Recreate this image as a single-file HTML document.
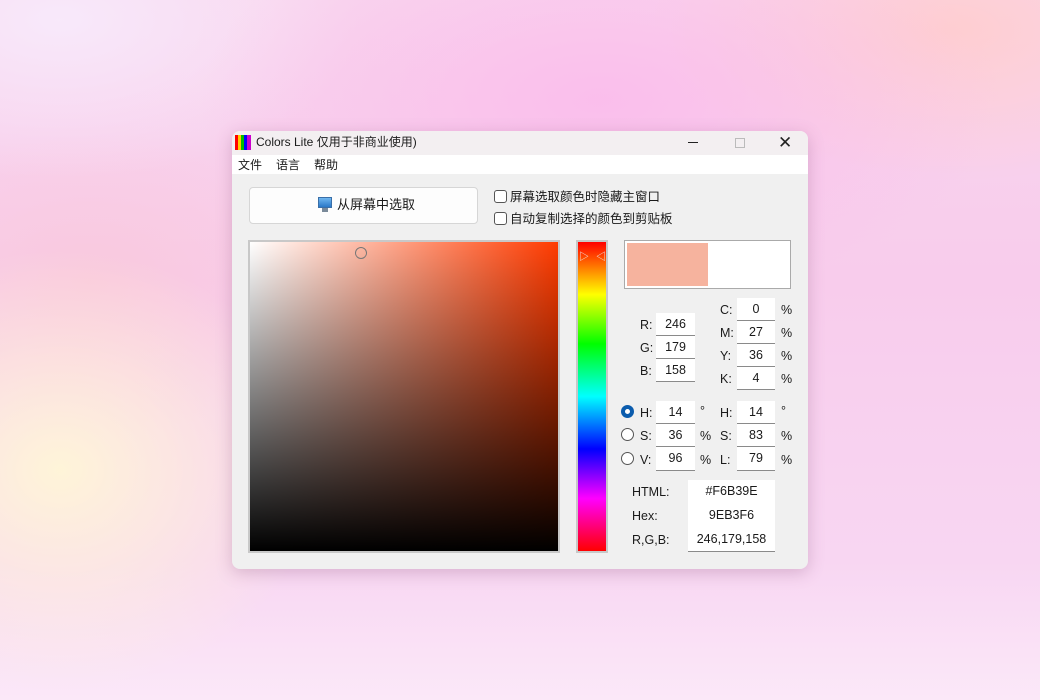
<!DOCTYPE html>
<html><head><meta charset="utf-8"><style>
*{margin:0;padding:0;box-sizing:border-box}
body{width:1040px;height:700px;overflow:hidden;position:relative;font-family:"Liberation Sans","Noto Sans CJK SC",sans-serif;font-size:12px;color:#1a1a1a;
background:
radial-gradient(ellipse 260px 220px at 60px 470px,rgba(255,246,215,.95),rgba(255,246,215,0)),
radial-gradient(ellipse 400px 200px at 600px 100px,rgba(250,185,235,.8),rgba(250,185,235,0)),
radial-gradient(ellipse 300px 150px at 950px 30px,rgba(255,205,205,.9),rgba(255,205,205,0)),
radial-gradient(ellipse 300px 160px at 60px 20px,rgba(248,235,252,.9),rgba(248,235,252,0)),
radial-gradient(ellipse 250px 160px at 90px 280px,rgba(250,200,215,.7),rgba(250,200,215,0)),
linear-gradient(180deg,#f9d6ee 0%,#f8ccec 40%,#f8d6f2 80%,#fbe8f8 100%);}
.a{position:absolute}
.win{left:232px;top:131px;width:576px;height:438px;background:#f0f0f0;border-radius:8px;overflow:hidden;box-shadow:0 4px 16px rgba(120,60,100,.25)}
.tb{left:0;top:0;width:576px;height:24px;background:#f3eff1}
.mn{left:0;top:24px;width:576px;height:19px;background:#fff}
.in{position:absolute;background:#fff;border-bottom:1px solid #8a8a8a;text-align:center;line-height:22px;font-size:12.5px}
.lb{position:absolute;font-size:12.5px;line-height:16px}
.cb{position:absolute;width:13px;height:13px;border:1px solid #555;border-radius:3px;background:#fff}
.rd{position:absolute;width:13px;height:13px;border:1px solid #555;border-radius:50%;background:#fff}
</style></head><body>
<div class="a win">
 <div class="a tb"></div>
 <div class="a" style="left:3px;top:4px;width:16px;height:15px;background:linear-gradient(90deg,#f00 0 3px,#fc0 3px 6px,#0b0 6px 9px,#00f 9px 12px,#c0c 12px 16px)"></div>
 <div class="a" style="left:24px;top:3px;font-size:12px;line-height:16px">Colors Lite 仅用于非商业使用)</div>
 <div class="a" style="left:456px;top:11px;width:10px;height:1px;background:#222"></div>
 <div class="a" style="left:503px;top:7px;width:10px;height:10px;border:1px solid #bbb"></div>
 <div class="a" style="left:546px;top:2px;font-size:17px;color:#222">✕</div>
 <div class="a mn"></div>
 <div class="a" style="left:6px;top:26px;font-size:12px;line-height:16px">文件</div>
 <div class="a" style="left:44px;top:26px;font-size:12px;line-height:16px">语言</div>
 <div class="a" style="left:82px;top:26px;font-size:12px;line-height:16px">帮助</div>
</div>
<!-- button -->
<div class="a" style="left:249px;top:187px;width:229px;height:37px;background:#fdfdfd;border:1px solid #d6d6d6;border-radius:4px"></div>
<div class="a" style="left:318px;top:197px;width:14px;height:11px;background:linear-gradient(#6fb6f0,#2a78c8);border:1px solid #3a6fa8"></div>
<div class="a" style="left:322px;top:208px;width:6px;height:4px;background:#7a8a9a"></div>
<div class="lb" style="left:337px;top:197px;font-size:13px">从屏幕中选取</div>
<div class="cb" style="left:494px;top:190px"></div>
<div class="lb" style="left:510px;top:189px">屏幕选取颜色时隐藏主窗口</div>
<div class="cb" style="left:494px;top:212px"></div>
<div class="lb" style="left:510px;top:211px">自动复制选择的颜色到剪贴板</div>
<!-- SV square -->
<div class="a" style="left:248px;top:240px;width:312px;height:313px;border:2px solid #c8c8c8;background:linear-gradient(to bottom,rgba(0,0,0,0),#000),linear-gradient(to right,#fff,#ff3b00)"></div>
<div class="a" style="left:355px;top:247px;width:12px;height:12px;border:1.5px solid #777;border-radius:50%"></div>
<!-- hue -->
<div class="a" style="left:576px;top:240px;width:32px;height:313px;border:2px solid #c8c8c8;background:linear-gradient(#f00,#ff0 17%,#0f0 33%,#0ff 50%,#00f 67%,#f0f 83%,#f00)"></div>
<div class="a" style="left:579px;top:248px;font-size:10px;color:#eee">▷</div>
<div class="a" style="left:596px;top:248px;font-size:10px;color:#eee">◁</div>
<!-- swatch -->
<div class="a" style="left:624px;top:240px;width:167px;height:49px;background:#fff;border:1px solid #aaa"></div>
<div class="a" style="left:627px;top:243px;width:81px;height:43px;background:#f6b39e"></div>
<!-- RGB -->
<div class="lb" style="left:640px;top:317px">R:</div><div class="in" style="left:656px;top:313px;width:39px;height:23px">246</div>
<div class="lb" style="left:640px;top:340px">G:</div><div class="in" style="left:656px;top:336px;width:39px;height:23px">179</div>
<div class="lb" style="left:640px;top:363px">B:</div><div class="in" style="left:656px;top:359px;width:39px;height:23px">158</div>
<!-- CMYK -->
<div class="lb" style="left:720px;top:302px">C:</div><div class="in" style="left:737px;top:298px;width:38px;height:23px">0</div><div class="lb" style="left:781px;top:302px">%</div>
<div class="lb" style="left:720px;top:325px">M:</div><div class="in" style="left:737px;top:321px;width:38px;height:23px">27</div><div class="lb" style="left:781px;top:325px">%</div>
<div class="lb" style="left:720px;top:348px">Y:</div><div class="in" style="left:737px;top:344px;width:38px;height:23px">36</div><div class="lb" style="left:781px;top:348px">%</div>
<div class="lb" style="left:720px;top:371px">K:</div><div class="in" style="left:737px;top:367px;width:38px;height:23px">4</div><div class="lb" style="left:781px;top:371px">%</div>
<!-- HSV -->
<div class="rd" style="left:621px;top:405px;border:4px solid #0b5cad"></div>
<div class="lb" style="left:640px;top:405px">H:</div><div class="in" style="left:656px;top:401px;width:39px;height:23px">14</div><div class="lb" style="left:700px;top:403px">°</div>
<div class="rd" style="left:621px;top:428px"></div>
<div class="lb" style="left:640px;top:428px">S:</div><div class="in" style="left:656px;top:424px;width:39px;height:23px">36</div><div class="lb" style="left:700px;top:428px">%</div>
<div class="rd" style="left:621px;top:452px"></div>
<div class="lb" style="left:640px;top:452px">V:</div><div class="in" style="left:656px;top:447px;width:39px;height:24px">96</div><div class="lb" style="left:700px;top:452px">%</div>
<!-- HSL -->
<div class="lb" style="left:720px;top:405px">H:</div><div class="in" style="left:737px;top:401px;width:38px;height:23px">14</div><div class="lb" style="left:781px;top:403px">°</div>
<div class="lb" style="left:720px;top:428px">S:</div><div class="in" style="left:737px;top:424px;width:38px;height:23px">83</div><div class="lb" style="left:781px;top:428px">%</div>
<div class="lb" style="left:720px;top:452px">L:</div><div class="in" style="left:737px;top:447px;width:38px;height:24px">79</div><div class="lb" style="left:781px;top:452px">%</div>
<!-- hex -->
<div class="lb" style="left:632px;top:484px">HTML:</div><div class="in" style="left:688px;top:480px;width:87px;height:24px;border-bottom:0">#F6B39E</div>
<div class="lb" style="left:632px;top:508px">Hex:</div><div class="in" style="left:688px;top:504px;width:87px;height:24px;border-bottom:0">9EB3F6</div>
<div class="lb" style="left:632px;top:532px">R,G,B:</div><div class="in" style="left:688px;top:528px;width:87px;height:24px">246,179,158</div>
</body></html>
